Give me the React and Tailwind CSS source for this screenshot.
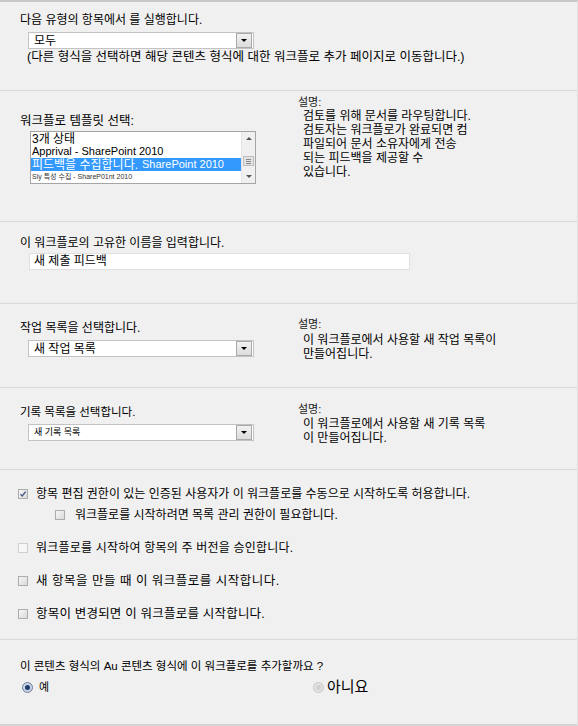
import React from 'react';

const font = { fontFamily: '"Liberation Sans", "Noto Sans CJK KR", sans-serif' };

// dropdown with the little grey arrow button on the right
const SelectBox = ({ value, small }) => (
    <div className="flex items-center w-[226px] h-[17px] bg-white border border-[#c3c3c3]">
        <span className={`flex-1 pl-[5px] leading-none text-black ${small ? 'text-[9px] text-[#555]' : 'text-[12px]'}`}>{value}</span>
        <span className="flex items-center justify-center w-[16px] h-[15px] mr-[1px] bg-gradient-to-b from-[#f2f2f2] to-[#dcdcdc] border border-[#a9a9a9]">
            <span className="w-0 h-0 border-l-[3px] border-r-[3px] border-t-[3px] border-l-transparent border-r-transparent border-t-black" />
        </span>
    </div>
);

const Checkbox = ({ checked }) => (
    <span className="flex items-center justify-center w-[10px] h-[10px] border border-[#acacac] bg-gradient-to-br from-[#f6f6f6] to-[#dadada] flex-shrink-0">
        {checked && (
            <svg width="8" height="8" viewBox="0 0 8 8">
                <path d="M1.5 4.2 L3.3 6 L6.6 1.6" fill="none" stroke="#4b5a8c" strokeWidth="1.4" />
            </svg>
        )}
    </span>
);

const Radio = ({ checked }) => (
    <span className={`flex items-center justify-center w-[11px] h-[11px] rounded-full border ${checked ? 'border-[#6f7f9a] bg-[#c9d4e4]' : 'border-[#c8c8c8] bg-[#e2e2e2]'}`}>
        <span className={`w-[5px] h-[5px] rounded-full ${checked ? 'bg-[#1e3e6e]' : 'bg-[#d0d0d0]'}`} />
    </span>
);

const Description = ({ lines, top, gap }) => (
    <div className={`w-[240px] ${top}`}>
        <div className="text-[11px] leading-[14px] text-[#222]">설명:</div>
        <div className={`pl-[5px] text-[12px] leading-[14px] text-black ${gap}`}>
            {lines.map((l) => (
                <div key={l}>{l}</div>
            ))}
        </div>
    </div>
);

export default function App() {
    return (
        <div style={font} className="w-[578px] h-[726px] bg-[#f0f0f0] border-t-2 border-t-[#c8c8c8] border-b-2 border-b-[#d4d4d4] border-r border-r-[#e2e2e2] text-black overflow-hidden">
            {/* content type */}
            <div className="h-[89px] border-b border-[#d9d9d9] pl-[20px] pt-[11px]">
                <div className="text-[12px] leading-[14px]">다음 유형의 항목에서 를 실행합니다.</div>
                <div className="ml-[8px] mt-[5px]">
                    <SelectBox value="모두" />
                </div>
                <div className="ml-[7px] mt-[1px] text-[12.5px] leading-[14px]">(다른 형식을 선택하면 해당 콘텐츠 형식에 대한 워크플로 추가 페이지로 이동합니다.)</div>
            </div>

            {/* template */}
            <div className="h-[131px] border-b border-[#d9d9d9] flex">
                <div className="w-[280px] pl-[20px] pt-[23px]">
                    <div className="text-[12.5px] leading-[14px]">워크플로 템플릿 선택:</div>
                    <div className="ml-[10px] mt-[3px] w-[226px] h-[53px] bg-white border border-[#a5a5a5] flex">
                        <div className="flex-1 min-w-0">
                            <div className="h-[13px] flex items-center pl-[1px] text-[12px] whitespace-nowrap">3개 상태</div>
                            <div className="h-[13px] flex items-center pl-[1px] text-[11px] whitespace-nowrap">Apprival - SharePoint 2010</div>
                            <div className="h-[13px] flex items-center gap-[4px] bg-[#3399ff] text-white pl-[1px] whitespace-nowrap">
                                <span className="text-[12px] leading-none">피드백을 수집합니다.</span>
                                <span className="text-[11px] leading-none">SharePoint 2010</span>
                            </div>
                            <div className="h-[12px] flex items-center pl-[1px] text-[7px] text-[#333] whitespace-nowrap">Sly 특성 수집 - ShareP01nt 2010</div>
                        </div>
                        <div className="w-[14px] bg-[#f0f0f0] border-l border-[#e4e4e4] flex flex-col items-center">
                            <span className="mt-[5px] w-0 h-0 border-l-[3px] border-r-[3px] border-b-[3px] border-l-transparent border-r-transparent border-b-[#555]" />
                            <span className="mt-[16px] w-[11px] h-[10px] bg-[#e3e3e3] border border-[#bdbdbd] flex flex-col items-center justify-center gap-[1px]">
                                <span className="w-[5px] h-px bg-[#888]" />
                                <span className="w-[5px] h-px bg-[#888]" />
                                <span className="w-[5px] h-px bg-[#888]" />
                            </span>
                            <span className="mt-auto mb-[5px] w-0 h-0 border-l-[3px] border-r-[3px] border-t-[3px] border-l-transparent border-r-transparent border-t-[#555]" />
                        </div>
                    </div>
                </div>
                <Description
                    top="pt-[4px] pl-[18px]"
                    gap="text-[12.5px]"
                    lines={['검토를 위해 문서를 라우팅합니다.', '검토자는 워크플로가 완료되면 컴', '파일되어 문서 소유자에게 전송', '되는 피드백을 제공할 수', '있습니다.']}
                />
            </div>

            {/* name */}
            <div className="h-[82px] border-b border-[#d9d9d9] pl-[20px] pt-[14px]">
                <div className="text-[12px] leading-[14px]">이 워크플로의 고유한 이름을 입력합니다.</div>
                <div className="ml-[9px] mt-[3px] w-[381px] h-[17px] bg-white border border-[#e0e0e0] pl-[4px] text-[12px] leading-[15px]">새 제출 피드백</div>
            </div>

            {/* task list */}
            <div className="h-[84px] border-b border-[#d9d9d9] flex">
                <div className="w-[280px] pl-[20px] pt-[17px]">
                    <div className="text-[12px] leading-[14px]">작업 목록을 선택합니다.</div>
                    <div className="ml-[8px] mt-[5px]">
                        <SelectBox value="새 작업 목록" />
                    </div>
                </div>
                <Description top="pt-[13px] pl-[18px]" gap="mt-[2px]" lines={['이 워크플로에서 사용할 새 작업 목록이', '만들어집니다.']} />
            </div>

            {/* history list */}
            <div className="h-[82px] border-b border-[#d9d9d9] flex">
                <div className="w-[280px] pl-[20px] pt-[17px]">
                    <div className="text-[11.5px] leading-[14px]">기록 목록을 선택합니다.</div>
                    <div className="ml-[8px] mt-[5px]">
                        <SelectBox value="새 기록 목록" small />
                    </div>
                </div>
                <Description top="pt-[14px] pl-[18px]" gap="mt-[1px]" lines={['이 워크플로에서 사용할 새 기록 목록', '이 만들어집니다.']} />
            </div>

            {/* start options */}
            <div className="h-[170px] border-b border-[#d9d9d9] pl-[18px] pt-[17px] text-[12px] leading-[14px]">
                <label className="flex items-center gap-[8px]">
                    <Checkbox checked />
                    <span>항목 편집 권한이 있는 인증된 사용자가 이 워크플로를 수동으로 시작하도록 허용합니다.</span>
                </label>
                <label className="flex items-center gap-[10px] ml-[37px] mt-[7px]">
                    <Checkbox />
                    <span>워크플로를 시작하려면 목록 관리 권한이 필요합니다.</span>
                </label>
                <label className="flex items-center gap-[8px] mt-[19px]">
                    <span className="w-[10px] h-[10px] border border-[#cfcfcf] bg-[#f7f7f7] flex-shrink-0" />
                    <span className="tracking-[0.2px]">워크플로를 시작하여 항목의 주 버전을 승인합니다.</span>
                </label>
                <label className="flex items-center gap-[8px] mt-[19px]">
                    <Checkbox />
                    <span className="text-[12.5px] tracking-[0.5px]">새 항목을 만들 때 이 워크플로를 시작합니다.</span>
                </label>
                <label className="flex items-center gap-[8px] mt-[19px]">
                    <Checkbox />
                    <span className="text-[12.5px] tracking-[0.2px]">항목이 변경되면 이 워크플로를 시작합니다.</span>
                </label>
            </div>

            {/* add to content types */}
            <div className="pl-[20px] pt-[19px]">
                <div className="text-[11.5px] leading-[14px]">이 콘텐츠 형식의 Au 콘텐츠 형식에 이 워크플로를 추가할까요 ?</div>
                <div className="flex items-center mt-[6px] h-[16px]">
                    <label className="flex items-center gap-[6px] ml-[2px] w-[291px]">
                        <Radio checked />
                        <span className="text-[11px]">예</span>
                    </label>
                    <label className="flex items-center gap-[3px]">
                        <Radio />
                        <span className="text-[15px] leading-[16px]">아니요</span>
                    </label>
                </div>
            </div>
        </div>
    );
}
